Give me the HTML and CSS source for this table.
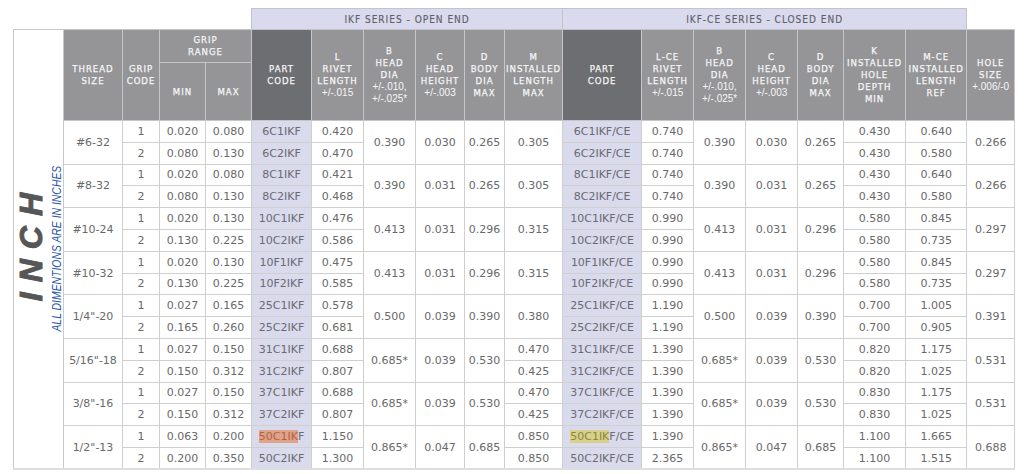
FILE: index.html
```html
<!DOCTYPE html>
<html>
<head>
<meta charset="utf-8">
<link rel="stylesheet" href="styles.css">
</head>
<body>
<div class="wrap">
<table class="spec">
<colgroup>
<col class="w-inch"><col class="w-thread"><col class="w-grip"><col class="w-min"><col class="w-max">
<col class="w-part"><col class="w-l"><col class="w-b"><col class="w-c"><col class="w-d"><col class="w-m">
<col class="w-partce"><col class="w-lce"><col class="w-bce"><col class="w-cce"><col class="w-dce"><col class="w-k"><col class="w-mce"><col class="w-hole">
</colgroup>
<tr class="series-row">
<th class="blank" colspan="5"></th>
<th class="series" colspan="6">IKF SERIES - OPEN END</th>
<th class="series" colspan="7">IKF-CE SERIES - CLOSED END</th>
<th class="blank"></th>
</tr>
<tr class="head1">
<th class="inch" rowspan="19">
<div class="label">
<span class="big">INCH</span>
<span class="note">ALL DIMENTIONS ARE IN INCHES</span>
</div>
</th>
<th class="h" rowspan="2">THREAD<br>SIZE</th>
<th class="h" rowspan="2">GRIP<br>CODE</th>
<th class="h" colspan="2">GRIP<br>RANGE</th>
<th class="h dark" rowspan="2">PART<br>CODE</th>
<th class="h" rowspan="2">L<br>RIVET<br>LENGTH<br><span class="tol">+/-.015</span></th>
<th class="h" rowspan="2">B<br>HEAD<br>DIA<br><span class="tol">+/-.010,</span><br><span class="tol">+/-.025*</span></th>
<th class="h" rowspan="2">C<br>HEAD<br>HEIGHT<br><span class="tol">+/-.003</span></th>
<th class="h" rowspan="2">D<br>BODY<br>DIA<br>MAX</th>
<th class="h" rowspan="2">M<br>INSTALLED<br>LENGTH<br>MAX</th>
<th class="h dark" rowspan="2">PART<br>CODE</th>
<th class="h" rowspan="2">L-CE<br>RIVET<br>LENGTH<br><span class="tol">+/-.015</span></th>
<th class="h" rowspan="2">B<br>HEAD<br>DIA<br><span class="tol">+/-.010,</span><br><span class="tol">+/-.025*</span></th>
<th class="h" rowspan="2">C<br>HEAD<br>HEIGHT<br><span class="tol">+/-.003</span></th>
<th class="h" rowspan="2">D<br>BODY<br>DIA<br>MAX</th>
<th class="h" rowspan="2">K<br>INSTALLED<br>HOLE<br>DEPTH<br>MIN</th>
<th class="h" rowspan="2">M-CE<br>INSTALLED<br>LENGTH<br>REF</th>
<th class="h" rowspan="2">HOLE<br>SIZE<br><span class="tol">+.006/-0</span></th>
</tr>
<tr class="head2">
<th class="h">MIN</th>
<th class="h">MAX</th>
</tr>

<!-- #6-32 -->
<tr class="r">
<td rowspan="2">#6-32</td><td>1</td><td>0.020</td><td>0.080</td><td class="pc">6C1IKF</td><td>0.420</td>
<td rowspan="2">0.390</td><td rowspan="2">0.030</td><td rowspan="2">0.265</td><td rowspan="2">0.305</td>
<td class="pc">6C1IKF/CE</td><td>0.740</td><td rowspan="2">0.390</td><td rowspan="2">0.030</td><td rowspan="2">0.265</td>
<td>0.430</td><td>0.640</td><td rowspan="2">0.266</td>
</tr>
<tr class="r">
<td>2</td><td>0.080</td><td>0.130</td><td class="pc">6C2IKF</td><td>0.470</td>
<td class="pc">6C2IKF/CE</td><td>0.740</td><td>0.430</td><td>0.580</td>
</tr>

<!-- #8-32 -->
<tr class="r">
<td rowspan="2">#8-32</td><td>1</td><td>0.020</td><td>0.080</td><td class="pc">8C1IKF</td><td>0.421</td>
<td rowspan="2">0.390</td><td rowspan="2">0.031</td><td rowspan="2">0.265</td><td rowspan="2">0.305</td>
<td class="pc">8C1IKF/CE</td><td>0.740</td><td rowspan="2">0.390</td><td rowspan="2">0.031</td><td rowspan="2">0.265</td>
<td>0.430</td><td>0.640</td><td rowspan="2">0.266</td>
</tr>
<tr class="r">
<td>2</td><td>0.080</td><td>0.130</td><td class="pc">8C2IKF</td><td>0.468</td>
<td class="pc">8C2IKF/CE</td><td>0.740</td><td>0.430</td><td>0.580</td>
</tr>

<!-- #10-24 -->
<tr class="r">
<td rowspan="2">#10-24</td><td>1</td><td>0.020</td><td>0.130</td><td class="pc">10C1IKF</td><td>0.476</td>
<td rowspan="2">0.413</td><td rowspan="2">0.031</td><td rowspan="2">0.296</td><td rowspan="2">0.315</td>
<td class="pc">10C1IKF/CE</td><td>0.990</td><td rowspan="2">0.413</td><td rowspan="2">0.031</td><td rowspan="2">0.296</td>
<td>0.580</td><td>0.845</td><td rowspan="2">0.297</td>
</tr>
<tr class="r">
<td>2</td><td>0.130</td><td>0.225</td><td class="pc">10C2IKF</td><td>0.586</td>
<td class="pc">10C2IKF/CE</td><td>0.990</td><td>0.580</td><td>0.735</td>
</tr>

<!-- #10-32 -->
<tr class="r">
<td rowspan="2">#10-32</td><td>1</td><td>0.020</td><td>0.130</td><td class="pc">10F1IKF</td><td>0.475</td>
<td rowspan="2">0.413</td><td rowspan="2">0.031</td><td rowspan="2">0.296</td><td rowspan="2">0.315</td>
<td class="pc">10F1IKF/CE</td><td>0.990</td><td rowspan="2">0.413</td><td rowspan="2">0.031</td><td rowspan="2">0.296</td>
<td>0.580</td><td>0.845</td><td rowspan="2">0.297</td>
</tr>
<tr class="r">
<td>2</td><td>0.130</td><td>0.225</td><td class="pc">10F2IKF</td><td>0.585</td>
<td class="pc">10F2IKF/CE</td><td>0.990</td><td>0.580</td><td>0.735</td>
</tr>

<!-- 1/4"-20 -->
<tr class="r">
<td rowspan="2">1/4"-20</td><td>1</td><td>0.027</td><td>0.165</td><td class="pc">25C1IKF</td><td>0.578</td>
<td rowspan="2">0.500</td><td rowspan="2">0.039</td><td rowspan="2">0.390</td><td rowspan="2">0.380</td>
<td class="pc">25C1IKF/CE</td><td>1.190</td><td rowspan="2">0.500</td><td rowspan="2">0.039</td><td rowspan="2">0.390</td>
<td>0.700</td><td>1.005</td><td rowspan="2">0.391</td>
</tr>
<tr class="r">
<td>2</td><td>0.165</td><td>0.260</td><td class="pc">25C2IKF</td><td>0.681</td>
<td class="pc">25C2IKF/CE</td><td>1.190</td><td>0.700</td><td>0.905</td>
</tr>

<!-- 5/16"-18 -->
<tr class="r">
<td rowspan="2">5/16"-18</td><td>1</td><td>0.027</td><td>0.150</td><td class="pc">31C1IKF</td><td>0.688</td>
<td rowspan="2">0.685*</td><td rowspan="2">0.039</td><td rowspan="2">0.530</td><td>0.470</td>
<td class="pc">31C1IKF/CE</td><td>1.390</td><td rowspan="2">0.685*</td><td rowspan="2">0.039</td><td rowspan="2">0.530</td>
<td>0.820</td><td>1.175</td><td rowspan="2">0.531</td>
</tr>
<tr class="r">
<td>2</td><td>0.150</td><td>0.312</td><td class="pc">31C2IKF</td><td>0.807</td><td>0.425</td>
<td class="pc">31C2IKF/CE</td><td>1.390</td><td>0.820</td><td>1.025</td>
</tr>

<!-- 3/8"-16 -->
<tr class="r">
<td rowspan="2">3/8"-16</td><td>1</td><td>0.027</td><td>0.150</td><td class="pc">37C1IKF</td><td>0.688</td>
<td rowspan="2">0.685*</td><td rowspan="2">0.039</td><td rowspan="2">0.530</td><td>0.470</td>
<td class="pc">37C1IKF/CE</td><td>1.390</td><td rowspan="2">0.685*</td><td rowspan="2">0.039</td><td rowspan="2">0.530</td>
<td>0.830</td><td>1.175</td><td rowspan="2">0.531</td>
</tr>
<tr class="r">
<td>2</td><td>0.150</td><td>0.312</td><td class="pc">37C2IKF</td><td>0.807</td><td>0.425</td>
<td class="pc">37C2IKF/CE</td><td>1.390</td><td>0.830</td><td>1.025</td>
</tr>

<!-- 1/2"-13 -->
<tr class="r">
<td rowspan="2" class="last">1/2"-13</td><td>1</td><td>0.063</td><td>0.200</td><td class="pc"><span class="hl-orange">50C1IK</span>F</td><td>1.150</td>
<td rowspan="2" class="last">0.865*</td><td rowspan="2" class="last">0.047</td><td rowspan="2" class="last">0.685</td><td>0.850</td>
<td class="pc"><span class="hl-yellow">50C1IK</span>F/CE</td><td>1.390</td><td rowspan="2" class="last">0.865*</td><td rowspan="2" class="last">0.047</td><td rowspan="2" class="last">0.685</td>
<td>1.100</td><td>1.665</td><td rowspan="2" class="last">0.688</td>
</tr>
<tr class="r lastrow">
<td>2</td><td>0.200</td><td>0.350</td><td class="pc">50C2IKF</td><td>1.300</td><td>0.850</td>
<td class="pc">50C2IKF/CE</td><td>2.365</td><td>1.100</td><td>1.515</td>
</tr>
</table>
</div>
</body>
</html>
```
FILE: styles.css
```css
html, body {
  margin: 0;
  padding: 0;
  background: #ffffff;
}

.wrap {
  padding: 8px 0 0 13px;
}

.spec {
  border-collapse: collapse;
  table-layout: fixed;
  width: 1001px;
  font-family: "DejaVu Sans", Verdana, sans-serif;
  font-size: 11px;
  color: #696969;
}

.w-inch { width: 50px; }
.w-thread { width: 59px; }
.w-grip { width: 37px; }
.w-min { width: 46px; }
.w-max { width: 46px; }
.w-part { width: 60px; }
.w-l { width: 52px; }
.w-b { width: 52px; }
.w-c { width: 49px; }
.w-d { width: 40px; }
.w-m { width: 58px; }
.w-partce { width: 79px; }
.w-lce { width: 52px; }
.w-bce { width: 52px; }
.w-cce { width: 52px; }
.w-dce { width: 46px; }
.w-k { width: 62px; }
.w-mce { width: 61px; }
.w-hole { width: 48px; }

.spec th,
.spec td {
  padding: 0;
  text-align: center;
  vertical-align: middle;
}

.series-row { height: 21px; }
.head1 { height: 33px; }
.head2 { height: 58px; }

.blank {
  border: none;
  background: transparent;
}

.series {
  background: #d9daee;
  color: #5f6068;
  border: 1px solid #c3c3cc;
  font-family: "DejaVu Sans Condensed", "DejaVu Sans", sans-serif;
  font-weight: normal;
  font-size: 10px;
  letter-spacing: 1px;
  padding-left: 1px;
  -webkit-text-stroke: 0.15px #5f6068;
}

.h {
  background: #959598;
  color: #f6f6f6;
  border: 1px solid #c6c6c8;
  font-family: "DejaVu Sans Condensed", "DejaVu Sans", sans-serif;
  font-weight: normal;
  font-size: 9.5px;
  letter-spacing: 1px;
  line-height: 12px;
  padding-left: 1px;
  -webkit-text-stroke: 0.25px #f6f6f6;
}

.h.dark {
  background: #6d6e72;
}

.tol {
  font-family: "Liberation Sans", Arial, sans-serif;
  font-size: 10px;
  letter-spacing: 0;
  -webkit-text-stroke: 0;
}

.inch {
  background: #ffffff;
  border: 1px solid #c9c9c9;
  border-bottom: 2px solid #dedede;
}

.label {
  display: flex;
  flex-direction: row;
  align-items: center;
  justify-content: flex-end;
  gap: 3px;
  padding-right: 0;
}

.big {
  writing-mode: vertical-rl;
  transform: rotate(180deg);
  font-family: "Liberation Sans", Arial, sans-serif;
  font-weight: bold;
  font-style: italic;
  font-size: 32px;
  line-height: 32px;
  letter-spacing: 10px;
  color: #565656;
  padding-top: 10px;
  margin-bottom: 4px;
  -webkit-text-stroke: 1px #565656;
}

.note {
  writing-mode: vertical-rl;
  transform: rotate(180deg) scaleY(0.8);
  font-family: "Liberation Sans", Arial, sans-serif;
  font-style: italic;
  font-weight: normal;
  font-size: 13px;
  line-height: 13px;
  color: #2d57a8;
  white-space: nowrap;
}

.r { height: 21.8px; }

.r td {
  border: 1px solid #cfcfcf;
}

.r td.pc {
  background: #d9daec;
  color: #6a6a72;
}

.lastrow td,
.r td.last {
  border-bottom: 2px solid #dedede;
}

.hl-orange {
  background: #dfa28a;
  color: #b3643f;
}

.hl-yellow {
  background: #d8d08c;
  color: #8d8838;
}
```
